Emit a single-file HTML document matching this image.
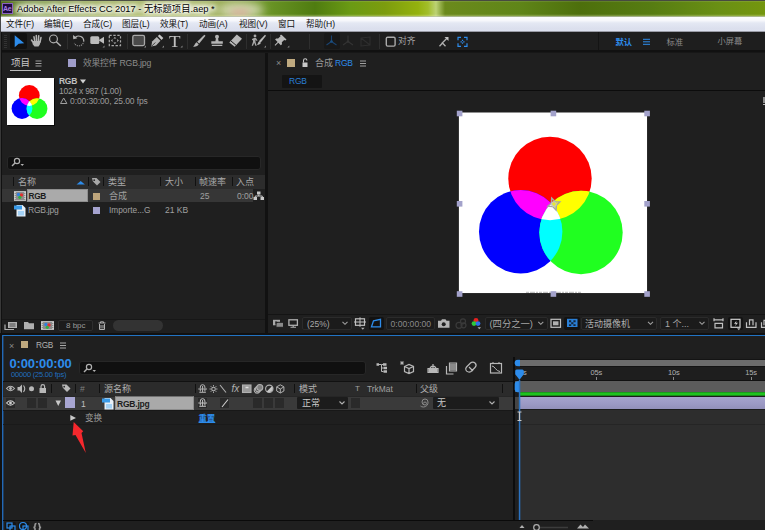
<!DOCTYPE html>
<html lang="zh-CN">
<head>
<meta charset="utf-8">
<title>Adobe After Effects CC 2017 - 无标题项目.aep *</title>
<style>
*{margin:0;padding:0;box-sizing:border-box}
html,body{width:765px;height:530px;overflow:hidden;background:#1f1f1f}
body{position:relative;font-family:"Liberation Sans","Noto Sans CJK SC",sans-serif;font-size:9px;color:#a4a4a4;line-height:1}
.a,.a *{position:absolute}
.t{white-space:nowrap;line-height:12px;height:12px}
svg{overflow:visible}
.blue{color:#2d8ceb}
/* title */
#title{left:0;top:0;width:765px;height:17px;background:#5f8517;overflow:hidden}
#menu{left:0;top:17px;width:765px;height:15px;background:linear-gradient(#fcfdfe 0,#f6f7fb 3.5px,#e4e8f3 6px,#dbdfed 12px,#dde1ef 14px,#dde1ef 14px,#9a9ca6 14px,#9a9ca6 15px)}
#menu .t{color:#111;font-size:8.6px;top:0.5px;line-height:13px;height:13px}
#tools{left:0;top:32px;width:765px;height:20px;background:#1e1e1e}

#tools .sep{top:2px;width:1px;height:15px;background:#2e2e2e}
.panel{background:#1f1f1f}
.dk{background:#161616}
.hd{background:#2b2b2b}
.sq{width:7px;height:7px}
.lav{background:#a9a7d6}
.tan{background:#c4a77c}
.vsep{width:1px;background:#111}
.btn{background:#161616;border:1px solid #2e2e2e;border-radius:2px}

#proj .t{font-size:8.5px}
.col{top:177px;width:1px;height:9px;background:#111}

#view .t{font-size:9px}
.hnd{width:5px;height:5px;background:#a8a6d2;border:0}
.dd{background:#1b1b1b;border:1px solid #2b2b2b;border-radius:2px}

#tl .t{font-size:9px}
.tcol{top:384px;width:1px;height:9px;background:#111}
.sw{width:9px;height:10px;background:#2a2a2a;top:398px}
</style>
</head>
<body>
<div class="a" id="title">
  <div style="left:0;top:0;width:765px;height:17px;background:linear-gradient(90deg,#4e6a1a 0,#6a8a2a 40px,#8da040 110px,#93a644 200px,#8fa448 225px,#6a9426 268px,#4f7c10 315px,#6a9a14 350px,#7c9c0e 385px,#94b20e 418px,#a2be2a 428px,#bcd274 436px,#6b8a1c 445px,#5f8518 520px,#4d6f0c 580px,#567c12 650px,#6a9014 720px,#74960e 765px)"></div>
  <div style="left:218px;top:2px;width:46px;height:16px;border-radius:50%;background:#e6e6cc;filter:blur(5px);opacity:.8"></div>
  <div style="left:230px;top:9px;width:20px;height:7px;border-radius:50%;background:#d9a898;filter:blur(3px);opacity:.8"></div>
  <div style="left:14px;top:3px;width:203px;height:12px;border-radius:6px;background:#fffff0;filter:blur(5px);opacity:.62"></div>
  <div style="left:0;top:0;width:765px;height:1px;background:#474a40"></div>
  <div style="left:0;top:1px;width:765px;height:1px;background:rgba(255,255,255,.1)"></div>
  <div style="left:0;top:14px;width:765px;height:1px;background:rgba(255,255,255,.06)"></div>
  <div style="left:0;top:15px;width:765px;height:1px;background:rgba(255,255,200,.22)"></div>
  <div style="left:0;top:16px;width:765px;height:1px;background:rgba(190,196,180,.75)"></div>
  <div style="left:1.5px;top:3px;width:11px;height:11px;background:#1f0a40;border:1px solid #8a60c0"></div>
  <div class="t" style="left:3px;top:3px;font-size:7px;color:#a57fe0;font-weight:bold;line-height:11px;height:11px;letter-spacing:-0.2px">Ae</div>
  <div class="t" id="ttl" style="left:17px;top:2.600px;font-size:9.3px;color:#000;line-height:13px;height:13px;text-shadow:0 0 3px #fff,0 0 4px #fff,0 0 5px #fff,0 0 6px rgba(255,255,255,.9),0 0 8px rgba(255,255,255,.8)">Adobe After Effects CC 2017 - 无标题项目.aep *</div>
</div>
<div class="a" id="menu">
  <div class="t" style="left:6px">文件(F)</div>
  <div class="t" style="left:44px">编辑(E)</div>
  <div class="t" style="left:83px">合成(C)</div>
  <div class="t" style="left:122px">图层(L)</div>
  <div class="t" style="left:160px">效果(T)</div>
  <div class="t" style="left:199px">动画(A)</div>
  <div class="t" style="left:239px">视图(V)</div>
  <div class="t" style="left:278px">窗口</div>
  <div class="t" style="left:306px">帮助(H)</div>
</div>
<div class="a" id="tools">
  <div style="left:0;top:18px;width:765px;height:2px;background:#111"></div>
  <div style="left:4px;top:3px;width:3px;height:13px;background:repeating-linear-gradient(#333 0,#333 1px,#1c1c1c 1px,#1c1c1c 2px)"></div>
  <div style="left:10px;top:1px;width:17px;height:16px;background:#111;border-radius:2px"></div>
  <svg style="left:0;top:0" width="765" height="20" viewBox="0 32 765 20">
    <path d="M14.700 35.200 L24.300 43.200 L18.700 43.700 L14.700 47.200 Z" fill="#2d8ceb"/>
    <!-- hand -->
    <g fill="none" stroke="#b4b4b4" stroke-width="1.500" stroke-linecap="round">
      <path d="M34 36.800 l.7 4 M36.300 35.500 l.2 5 M38.700 35.800 l-.3 5 M41 37.500 l-1 4.500 M31.500 40 l2.500 3.500"/>
    </g>
    <path d="M33 41 h7.800 l-1 3.500 l-1.300 1.900 h-4 l-2-2.500z" fill="#b4b4b4"/>
    <!-- zoom -->
    <circle cx="53.500" cy="38.900" r="3.900" fill="none" stroke="#b0b0b0" stroke-width="1.200"/>
    <path d="M56.300 41.700 l4.500 4.300" stroke="#b0b0b0" stroke-width="1.500"/>
    <!-- rotate -->
    <path d="M75.500 37.300 a5 5 0 0 1 8.300 3.700" fill="none" stroke="#b0b0b0" stroke-width="1.200"/>
    <path d="M83.800 41 a5 5 0 0 1 -9.500 2" fill="none" stroke="#8a8a8a" stroke-width="1.100" stroke-dasharray="1.200 0.900"/>
    <path d="M73 35 l0.300 4.200 4-1z" fill="#b8b8b8"/>
    <!-- camera -->
    <rect x="90.300" y="36.300" width="9" height="7.800" rx="1.500" fill="#bcbcbc"/>
    <path d="M98.500 40.200 l5.500-3.500 v7z" fill="#bcbcbc"/>
    <path d="M102.500 47.500 l2-2 v2z" fill="#8a8a8a"/>
    <!-- pan behind -->
    <rect x="109.300" y="35.400" width="11.200" height="10.200" fill="none" stroke="#a8a8a8" stroke-width="1.200" stroke-dasharray="2.400 1.600"/>
    <path d="M114.900 37 l1.500 1.500 h-3z M114.900 44 l1.500-1.500 h-3z M111 40.500 l1.500-1.500 v3z M118.800 40.500 l-1.500-1.500 v3z" fill="#b8b8b8"/>
    <!-- rect -->
    <rect x="132.800" y="35.400" width="11.700" height="10.200" rx="1.500" fill="#4a4a4a" stroke="#a8a8a8" stroke-width="1.300"/>
    <path d="M144 47.500 l2-2 v2z" fill="#8a8a8a"/>
    <!-- pen -->
    <path d="M151.300 46.500 l.8-5 4.700-4.500 3.700 3.700 -4.500 4.700z" fill="#b4b4b4"/>
    <path d="M151.800 46 l3.500-3.500" stroke="#1e1e1e" stroke-width="0.800"/>
    <path d="M157.800 36 l1.800-1.600 3.700 3.700 -1.700 1.800z" fill="#c8c8c8"/>
    <path d="M162 47.500 l2-2 v2z" fill="#8a8a8a"/>
    <path d="M180.500 47.500 l2-2 v2z" fill="#8a8a8a"/>
    <!-- brush -->
    <path d="M204.300 34.800 l1.200 1 -6.300 7.700 -2-1.700z" fill="#b4b4b4"/>
    <path d="M196.500 42.300 l2.200 1.900 c-.6 1.900 -3 2.700 -5.800 2.400 c1.800-1 1.900-2.900 3.600-4.300z" fill="#b4b4b4"/>
    <!-- stamp -->
    <circle cx="217" cy="36.800" r="2" fill="#b4b4b4"/>
    <path d="M216 38 h2 l.6 3.200 h-3.200z M211.300 41.200 h11.500 v2.600 h-11.500z M211.800 44.800 h10.500 v1.300 h-10.500z" fill="#b4b4b4"/>
    <!-- eraser -->
    <path d="M229.300 42.500 l7.500-8 5.200 4.300 -7.300 8z" fill="#b8b8b8"/>
    <path d="M231 41 l5.200 4.400" stroke="#1e1e1e" stroke-width="1"/>
    <!-- roto brush -->
    <path d="M265 34.800 l1 1 -5.500 7 -1.700-1.500z" fill="#b8b8b8"/>
    <path d="M259 41.500 l1.800 1.600 c-.5 1.300 -2 1.900 -4 1.700 c1.200-.8 1-2.200 2.200-3.300z" fill="#b8b8b8"/>
    <circle cx="255" cy="36" r="1.400" fill="#a8a8a8"/>
    <path d="M252 39 l2-1 h2 l1.500 2.500 -.8.600 -1.200-1.500 v2.500 l1.200 3.600 h-1.300 l-1.200-3 -1.200 3 h-1.300 l1.300-4 v-2 l-1 .8z" fill="#a8a8a8"/>
    <path d="M264 47.500 l2-2 v2z" fill="#8a8a8a"/>
    <!-- pin -->
    <path d="M281.500 34.800 l5 4.600 -1 1 -1.300-.5 -2.400 2.400 .2 2 -1.200 1 -2.500-2.500 -3 3 -.7-.7 3-3 -2.500-2.500 1-1.200 2 .2 2.400-2.400 -.5-1.300z" fill="#b8b8b8"/>
    <path d="M287.300 47.500 l2-2 v2z" fill="#8a8a8a"/>
  </svg>
  <div class="t" style="left:169.300px;top:2px;font-family:'Liberation Serif',serif;font-size:16px;line-height:16px;height:16px;color:#c0c0c0;transform:scaleX(1.180);transform-origin:0 0">T</div>
  <div class="sep" style="left:67px"></div>
  <div class="sep" style="left:127px"></div>
  <div class="sep" style="left:187px"></div>
  <div class="sep" style="left:246px"></div>
  <div class="sep" style="left:270px"></div>
  <div class="sep" style="left:309px"></div>
  <div class="sep" style="left:379px"></div>
  <div class="sep" style="left:598px;top:0;height:18px;background:#141414"></div>
  <div style="left:324px;top:1px;width:16px;height:16px;background:#181818;border-radius:2px"></div>
  <svg style="left:0;top:0" width="765" height="20" viewBox="0 32 765 20">
    <g fill="none" stroke-width="1.100">
    <path d="M331.500 35.500 v6 l-5 3.500 M331.500 41.500 l5 3.500" stroke="#1a4370"/>
    <path d="M348 35.500 v6 l-5 3.500 M348 41.500 l5 3.500" stroke="#343434"/>
    <path d="M361 38 l9 -1 v8 l-9 1z M361 38 l9 7" stroke="#2e2e2e"/>
    </g>
    <circle cx="331.500" cy="41.500" r="1.300" fill="#1b4f80"/>
    <circle cx="348" cy="41.500" r="1.300" fill="#343434"/>
    <rect x="386.300" y="37.300" width="8.800" height="8.800" rx="1.300" fill="none" stroke="#aaa" stroke-width="1.400"/>
    <path d="M439.500 46.300 l3-3.300 3 3.300 M441.700 43.500 l5.500-5.500" fill="none" stroke="#b0b0b0" stroke-width="1.300"/><path d="M444.500 37 h4 v4z" fill="#c0c0c0"/>
    <g fill="none" stroke="#2d8ceb" stroke-width="1.200">
      <path d="M458 40.300 v-3 h3 M464 37.300 h3 v3 M467 43.300 v3 h-3 M461 46.300 h-3 v-3"/>
      <path d="M460.500 41.800 h4 M462.500 39.800 v4" stroke-dasharray="1.300 1.400"/>
    </g>
    <path d="M643 39.300 h7 M643 41.800 h7 M643 44.300 h7" stroke="#2d8ceb" stroke-width="1"/>
  </svg>
  <div class="t" style="left:398px;top:3.3px;color:#a4a4a4;font-size:8.800px">对齐</div>
  <div class="t blue" style="left:615.5px;top:4px;font-size:8.300px;font-weight:bold">默认</div>
  <div class="t" style="left:666.500px;top:4px;font-size:8.300px;color:#8a8a8a">标准</div>
  <div class="t" style="left:717.500px;top:4px;font-size:8.200px;color:#8a8a8a">小屏幕</div>
</div>
<!-- dividers -->
<div class="a" style="left:0;top:52px;width:765px;height:1px;background:#171717"></div>
<div class="a" style="left:265px;top:53px;width:3px;height:280px;background:#111"></div>
<div class="a" style="left:0;top:32px;width:2px;height:498px;background:#111;border-left:1px solid #383838"></div>
<!-- project panel -->
<div class="a" id="proj" style="left:0;top:0;width:265px;height:334px">
  <div class="t" style="left:11px;top:57px;font-size:9.5px;color:#c8c8c8">项目</div>
  <div style="left:10px;top:70px;width:31px;height:1px;background:#bdbdbd"></div>
  <svg style="left:0;top:0" width="265" height="334"><path d="M35.5 61 h6 M35.500 63.500 h6 M35.500 66 h6" stroke="#a0a0a0" stroke-width="1"/></svg>
  <div class="lav" style="left:68px;top:59px;width:8px;height:8px;background:#9f9dc9"></div>
  <div class="t" style="left:83px;top:57px;font-size:8.700px;color:#8c8c8c;letter-spacing:-0.15px">效果控件 RGB.jpg</div>
  <!-- thumbnail -->
  <div style="left:7px;top:78px;width:47px;height:47px;background:#fff;box-shadow:1px 1px 0 #0a0a0a"></div>
  <svg style="left:7px;top:78px" width="47" height="47" viewBox="0 0 47 47">
    <defs>
      <clipPath id="tcr"><circle cx="22.3" cy="17.5" r="10.4"/></clipPath>
      <clipPath id="tcb"><circle cx="15" cy="30.500" r="10.400"/></clipPath>
      <clipPath id="tcg"><circle cx="30" cy="30.700" r="10.400"/></clipPath>
    </defs>
    <circle cx="22.300" cy="17.500" r="10.400" fill="#f00"/>
    <circle cx="15" cy="30.500" r="10.400" fill="#00f"/>
    <circle cx="30" cy="30.700" r="10.400" fill="#1fff1f"/>
    <circle cx="15" cy="30.500" r="10.400" fill="#f0f" clip-path="url(#tcr)"/>
    <circle cx="30" cy="30.700" r="10.400" fill="#ff0" clip-path="url(#tcr)"/>
    <circle cx="30" cy="30.700" r="10.400" fill="#0ff" clip-path="url(#tcb)"/>
    <g clip-path="url(#tcr)"><circle cx="30" cy="30.700" r="10.400" fill="#fff" clip-path="url(#tcb)"/></g>
  </svg>
  <div class="t" style="left:59px;top:75px;font-size:8.5px;font-weight:bold;color:#c0c0c0;letter-spacing:-0.3px">RGB</div>
  <svg style="left:0;top:0" width="265" height="334"><path d="M80 79.500 h6 l-3 4z" fill="#d0d0d0"/>
    <path d="M60.500 103.500 l3.200-5.500 3.200 5.500z" fill="none" stroke="#a0a0a0" stroke-width="1"/></svg>
  <div class="t" style="left:59px;top:85px;font-size:8.500px;color:#9c9c9c;letter-spacing:-0.25px">1024 x 987 (1.00)</div>
  <div class="t" style="left:70px;top:95px;font-size:8.500px;color:#9c9c9c;letter-spacing:-0.1px">0:00:30:00, 25.00 fps</div>
  <!-- search -->
  <div style="left:6.5px;top:155.5px;width:254px;height:14px;background:#101010;border-radius:3px;border:1px solid #272727"></div>
  <svg style="left:0;top:0" width="265" height="334"><circle cx="17" cy="161" r="2.600" fill="none" stroke="#b0b0b0" stroke-width="1.200"/><path d="M15 163 l-3 3" stroke="#b0b0b0" stroke-width="1.400"/><path d="M20.500 164 h3.500 l-1.750 2z" fill="#b0b0b0"/></svg>
  <!-- header -->
  <div style="left:2px;top:175px;width:263px;height:14px;background:#2c2c2c"></div>
  <div class="col" style="left:13px"></div>
  <div class="col" style="left:88px"></div>
  <div class="col" style="left:103px"></div>
  <div class="col" style="left:160px"></div>
  <div class="col" style="left:195px"></div>
  <div class="col" style="left:232px"></div>
  <div class="t" style="left:18px;top:176px;font-size:9px;color:#a8a8a8">名称</div>
  <div class="t" style="left:108px;top:176px;font-size:9px;color:#a8a8a8">类型</div>
  <div class="t" style="left:165px;top:176px;font-size:9px;color:#a8a8a8">大小</div>
  <div class="t" style="left:199px;top:176px;font-size:9px;color:#a8a8a8">帧速率</div>
  <div class="t" style="left:236px;top:176px;font-size:9px;color:#a8a8a8">入点</div>
  <svg style="left:0;top:0" width="265" height="334">
    <path d="M76.500 184.500 l4.200-3.600 4.200 3.600z" fill="#2d8ceb"/>
    <path d="M92 178 h4.500 l4 4 -3.500 3.500 -4.200-4.200 -0.800-3.300z" fill="#a8a8a8"/>
    <circle cx="94.200" cy="180.200" r="0.900" fill="#2c2c2c"/>
  </svg>
  <!-- row 1 selected -->
  <div style="left:2px;top:189px;width:251px;height:13px;background:#363636"></div>
  <div style="left:27px;top:189px;width:61px;height:13px;background:#aaa;border:1px solid #8f8f8f"></div>
  <div class="t" style="left:28.5px;top:190px;font-size:8.3px;font-weight:bold;color:#1c1c1c;letter-spacing:-0.3px">RGB</div>
  <svg style="left:0;top:0" width="265" height="334">
    <rect x="14.500" y="191.500" width="11" height="9" fill="#8c8c8c" stroke="#b8b8b8" stroke-width="1"/>
    <path d="M15 192 v8 M25 192 v8" stroke="#d8d8d8" stroke-width="1.400" stroke-dasharray="1 1"/>
    <circle cx="18.500" cy="194.500" r="1.700" fill="#3080e0"/><circle cx="21.500" cy="195" r="1.700" fill="#e03030"/><circle cx="19.800" cy="197.300" r="1.600" fill="#30b040"/>
    <path d="M257 191.500 h3.500 v3 h-3.500z M253.500 197 h3.500 v3 h-3.500z M260.500 197 h3.500 v3 h-3.500z" fill="#c8c8c8"/>
    <path d="M258.750 194.500 v1.500 M255.250 197 v-1 h7 v1" fill="none" stroke="#c8c8c8" stroke-width="1"/>
    <!-- file icon row2 -->
    <path d="M16.500 205 h6 l3 3 v8.500 h-9z" fill="#e8f0f8"/>
    <path d="M14 205.500 h8 v4 h-8z" fill="#3b9be8"/>
    <path d="M18 211 h6 v4.500 h-6z" fill="#a4d2f6"/>
  </svg>
  <div class="tan" style="left:92.5px;top:192.5px;width:7px;height:7px;background:#bfa67c"></div>
  <div class="t" style="left:109px;top:190px;font-size:9px;color:#a0a0a0">合成</div>
  <div class="t" style="left:200px;top:190px;color:#a0a0a0">25</div>
  <div class="t" style="left:237px;top:190px;color:#a0a0a0">0:00</div>
  <!-- row 2 -->
  <div class="t" style="left:28px;top:204px;font-size:8.500px;color:#a0a0a0;letter-spacing:-0.25px">RGB.jpg</div>
  <div class="lav" style="left:92.5px;top:206.5px;width:7px;height:7px;background:#a5a3cf"></div>
  <div class="t" style="left:109px;top:204px;color:#a0a0a0;font-size:8.300px">Importe...G</div>
  <div class="t" style="left:165px;top:204px;color:#a0a0a0">21 KB</div>
  <!-- bottom bar -->
  <div style="left:2px;top:318.5px;width:263px;height:1px;background:#171717"></div>
  <div style="left:58px;top:320px;width:35px;height:11px;border:1px solid #2e2e2e;border-radius:2px;background:#1c1c1c"></div>
  <div class="t" style="left:66px;top:320px;font-size:8px;color:#9a9a9a">8 bpc</div>
  <div style="left:113px;top:320px;width:50px;height:11px;border-radius:6px;background:#333"></div>
  <svg style="left:0;top:0" width="265" height="334">
    <rect x="8" y="322" width="9" height="6" fill="#b0b0b0"/><path d="M9.500 324 h6 M9.500 326 h6" stroke="#333" stroke-width="0.800"/><path d="M5 324.500 v5 h9" fill="none" stroke="#b0b0b0" stroke-width="1.200"/>
    <path d="M24 322 h4 l1 1.200 h5 v6 h-10z" fill="#b0b0b0"/>
    <rect x="41.500" y="321.500" width="12" height="8" fill="#8c8c8c" stroke="#b8b8b8" stroke-width="1"/>
    <path d="M42 322 v8 M53 322 v8" stroke="#d8d8d8" stroke-width="1.400" stroke-dasharray="1 1"/>
    <circle cx="46" cy="324.500" r="1.700" fill="#3080e0"/><circle cx="49" cy="325" r="1.700" fill="#e03030"/><circle cx="47.300" cy="327.300" r="1.600" fill="#30b040"/>
    <path d="M98.500 323 h7 M100.500 323 v-1.200 h3 v1.200 M99.500 324 v5.500 h5 v-5.500 M101 325 v3.500 M103 325 v3.500" fill="none" stroke="#b0b0b0" stroke-width="1"/>
  </svg>
</div>

<!-- comp viewer -->
<div class="a" id="view" style="left:0;top:0;width:765px;height:334px">
  <div style="left:268px;top:90px;width:497px;height:1px;background:#0c0c0c"></div>
  <div style="left:763px;top:97px;width:2px;height:6px;background:#8c8c8c"></div>
  <div style="left:763px;top:104px;width:2px;height:1px;background:#b8b8b8"></div>
  <div class="t" style="left:276px;top:57px;font-size:9px;color:#8a8a8a">×</div>
  <div style="left:287px;top:59px;width:8px;height:8px;background:#bfa97f"></div>
  <svg style="left:0;top:0" width="765" height="334">
    <rect x="302.500" y="62.500" width="5" height="4.500" fill="#c8c8c8"/><path d="M303.500 62.500 v-2 a1.700 1.700 0 0 1 3.400 0" fill="none" stroke="#c8c8c8" stroke-width="1.100"/>
    <path d="M360 61 h6 M360 63.500 h6 M360 66 h6" stroke="#a0a0a0" stroke-width="1"/>
  </svg>
  <div class="t" style="left:315px;top:57px;font-size:9px;color:#9a9a9a">合成</div>
  <div class="t blue" style="left:335px;top:57px;font-size:8.500px;letter-spacing:-0.2px">RGB</div>
  <div style="left:282px;top:75px;width:40px;height:13px;background:#141414;border-radius:1px"></div>
  <div class="t blue" style="left:289px;top:75px;font-size:8.500px;letter-spacing:-0.2px;color:#2a7fd6">RGB</div>
  <!-- canvas -->
  <svg style="left:0;top:0" width="765" height="334"><rect x="458.9" y="112.5" width="188.15" height="180.55" fill="#fff"/></svg>
  <svg style="left:0;top:0" width="765" height="334">
    <defs>
      <clipPath id="cr"><circle cx="550" cy="178.500" r="41.700"/></clipPath>
      <clipPath id="cb"><circle cx="520.700" cy="231.700" r="41.700"/></clipPath>
    </defs>
    <circle cx="550" cy="178.500" r="41.700" fill="#f00"/>
    <circle cx="520.700" cy="231.700" r="41.700" fill="#00f"/>
    <circle cx="581" cy="232.500" r="41.700" fill="#20ff20"/>
    <circle cx="520.700" cy="231.700" r="41.700" fill="#f0f" clip-path="url(#cr)"/>
    <circle cx="581" cy="232.500" r="41.700" fill="#ff0" clip-path="url(#cr)"/>
    <circle cx="581" cy="232.500" r="41.700" fill="#0ff" clip-path="url(#cb)"/>
    <g clip-path="url(#cr)"><circle cx="581" cy="232.500" r="41.700" fill="#fff" clip-path="url(#cb)"/></g>
    <path d="M526 292.300 h55" stroke="#c4c4c4" stroke-width="1.200" stroke-dasharray="3 1 5 1 2 1"/>
    <!-- anchor -->
    <g transform="translate(553.9 204.1) rotate(-20)"><path d="M0 -6.500 L2 -2 L6.500 0 L2 2 L0 6.500 L-2 2 L-6.500 0 L-2 -2Z" fill="rgba(180,180,170,.3)" stroke="#a6a6a2" stroke-width="1.300"/><circle cx="0" cy="0" r="2.300" fill="none" stroke="#c8c8bc" stroke-width="1.100"/></g>
  </svg>
  <svg style="left:0;top:0" width="765" height="334"><rect x="456.8" y="110.7" width="5.6" height="5.6" fill="#a3a2cb"/><rect x="550.6" y="110.7" width="5.6" height="5.6" fill="#a3a2cb"/><rect x="644.3" y="110.7" width="5.6" height="5.6" fill="#a3a2cb"/><rect x="456.8" y="201.0" width="5.6" height="5.6" fill="#a3a2cb"/><rect x="644.3" y="201.0" width="5.6" height="5.6" fill="#a3a2cb"/><rect x="456.8" y="291.2" width="5.6" height="5.6" fill="#a3a2cb"/><rect x="550.6" y="291.2" width="5.6" height="5.6" fill="#a3a2cb"/><rect x="644.3" y="291.2" width="5.6" height="5.6" fill="#a3a2cb"/></svg>
  <!-- bottom bar -->
  <div style="left:268px;top:313.5px;width:497px;height:1px;background:#141414"></div>
  <div class="dd" style="left:302px;top:317px;width:50px;height:13px"></div>
  <div class="t" style="left:307px;top:318px;font-size:8.500px;color:#a8a8a8">(25%)</div>
  <div style="left:369px;top:317px;width:15px;height:13px;background:#121212;border-radius:2px"></div>
  <div class="dd" style="left:386px;top:317px;width:49px;height:13px"></div>
  <div class="t" style="left:390.5px;top:318px;font-size:8.6px;color:#8a8a8a;letter-spacing:0px">0:00:00:00</div>
  <div class="dd" style="left:485px;top:317px;width:63px;height:13px"></div>
  <div class="t" style="left:489.5px;top:318px;font-size:9.3px;color:#a8a8a8">(四分之一)</div>
  <div style="left:564px;top:317px;width:16px;height:13px;background:#121212;border-radius:2px"></div>
  <div class="dd" style="left:581px;top:317px;width:76px;height:13px"></div>
  <div class="t" style="left:585px;top:318px;font-size:9px;color:#b0b0b0">活动摄像机</div>
  <div class="dd" style="left:660px;top:317px;width:49px;height:13px"></div>
  <div class="t" style="left:665px;top:318px;font-size:9px;color:#a8a8a8">1 个...</div>
  <div style="left:728px;top:317px;width:15px;height:13px;background:#121212;border-radius:2px"></div>

  <svg style="left:0;top:0" width="765" height="334"><g transform="translate(0,-0.7)">
    <rect x="273" y="320.500" width="7" height="5.500" fill="#a8a8a8"/><rect x="276" y="323" width="7.500" height="5" fill="#8a8a8a" stroke="#1f1f1f" stroke-width="1"/><path d="M275.500 321.800 l2.500 1.500 -2.500 1.500z" fill="#1f1f1f"/>
    <rect x="288.900" y="320.500" width="8.500" height="5.500" fill="none" stroke="#b0b0b0" stroke-width="1.300"/><path d="M290.500 328 h5.500 M293.200 326 v2" stroke="#b0b0b0" stroke-width="1.100"/>
    <path d="M342.5 322.5 l2.5 2.500 2.500-2.500" fill="none" stroke="#a0a0a0" stroke-width="1.100"/>
    <rect x="355.500" y="319.500" width="9" height="6.500" fill="none" stroke="#c0c0c0" stroke-width="1.200"/><path d="M360 318 v9.500 M354 322.700 h12" stroke="#c0c0c0" stroke-width="1"/><path d="M361 328.500 h3.500 l-1.750 2z" fill="#b0b0b0"/>
    <path d="M371.500 327.500 l2-6 7-1.500 v7.500z" fill="none" stroke="#2d8ceb" stroke-width="1.300"/>
    <path d="M438 321.500 h3 l1-1.500 h3.500 l1 1.500 h3 v7 h-11.500z" fill="#b4b4b4"/><circle cx="443.700" cy="325" r="2" fill="#1f1f1f"/>
    <g fill="none" stroke="#3a3a3a" stroke-width="1.200"><circle cx="463" cy="322" r="2.500"/><circle cx="459" cy="326" r="3"/><circle cx="463.500" cy="326" r="2.500"/></g>
    <circle cx="476" cy="321" r="2.400" fill="#e82020"/><circle cx="474" cy="324.300" r="2.400" fill="#2fc83a"/><circle cx="478" cy="324.300" r="2.400" fill="#2d6fe8"/><path d="M477.500 328 h3.500 l-1.750 2z" fill="#b0b0b0"/>
    <path d="M538.3 322.5 l2.5 2.500 2.500-2.500" fill="none" stroke="#a0a0a0" stroke-width="1.100"/>
    <rect x="551" y="320" width="9.500" height="8" fill="none" stroke="#c0c0c0" stroke-width="1.200"/><rect x="553" y="322" width="5.500" height="4" fill="#b0b0b0"/>
    <rect x="567" y="319.500" width="10.500" height="8.200" fill="#2a7fd6"/>
    <path d="M569 321 h2.200 v2 h-2.200z M573.400 321 h2.200 v2 h-2.200z M571.200 323 h2.200 v2 h-2.200z M569 325 h2.200 v1.700 h-2.200z M573.400 325 h2.200 v1.700 h-2.200z" fill="#14273c"/>
    <path d="M648.0 322.5 l2.5 2.500 2.500-2.500" fill="none" stroke="#a0a0a0" stroke-width="1.100"/> <path d="M699.5 322.5 l2.5 2.500 2.500-2.500" fill="none" stroke="#a0a0a0" stroke-width="1.100"/>
    <path d="M714 320.500 h9 M714 319 v3 M723 319 v3 M715 324 h7.500 v4.500 h-7.500z" fill="none" stroke="#c0c0c0" stroke-width="1.200"/>
    <rect x="731" y="320" width="9" height="8" fill="none" stroke="#d0d0d0" stroke-width="1.200"/><path d="M736.500 321.500 l-2.500 3 h2 l-1 2.500 3-3.500 h-2z" fill="#d0d0d0"/><path d="M737 329 h3.500 l-1.750 2z" fill="#b0b0b0"/>
    <path d="M746.500 323 v5 h9.500 v-5 M749.500 326 v-5.500 h3.500 v5.500" fill="none" stroke="#c0c0c0" stroke-width="1.200"/>
    <path d="M761.500 323 v5 h6 M764 326 v-5 h3" fill="none" stroke="#c0c0c0" stroke-width="1.200"/>
  </g></svg>
</div>

<!-- timeline -->
<div class="a" id="tl" style="left:0;top:0;width:765px;height:530px">
  <div style="left:0;top:333px;width:765px;height:2px;background:#111"></div>
  <div style="left:2px;top:335px;width:763px;height:1px;background:#2274c4"></div>
  <div style="left:2px;top:335px;width:1px;height:195px;background:#2268b6"></div>
  <div style="left:3px;top:336px;width:1px;height:194px;background:rgba(34,104,182,.4)"></div>
  <div style="left:5px;top:522px;width:11px;height:8px;background:#141414;border-radius:2px 2px 0 0"></div>
  <div style="left:18px;top:522px;width:11px;height:8px;background:#141414;border-radius:2px 2px 0 0"></div>
  <div style="left:0;top:335px;width:2px;height:195px;background:#111"></div>
  <!-- tab -->
  <div class="t" style="left:9px;top:340px;font-size:9px;color:#8a8a8a">×</div>
  <div style="left:21px;top:341px;width:7px;height:7px;background:#bfa97f"></div>
  <div class="t" style="left:36px;top:339px;font-size:8.300px;color:#b0b0b0;letter-spacing:-0.3px">RGB</div>
  <svg style="left:0;top:0" width="765" height="530"><path d="M60 343 h6 M60 345.500 h6 M60 348 h6" stroke="#a8a8a8" stroke-width="1"/></svg>
  <!-- timecode -->
  <div class="t" style="left:9.5px;top:356px;font-size:13px;font-weight:bold;color:#2d8ceb;line-height:16px;height:16px;letter-spacing:-0.15px">0:00:00:00</div>
  <div class="t" style="left:11px;top:370px;font-size:7.500px;color:#1f6fc0;line-height:10px;height:10px;letter-spacing:-0.2px">00000 (25.00 fps)</div>
  <!-- search -->
  <div style="left:79px;top:360.5px;width:287px;height:14px;background:#101010;border-radius:3px;border:1px solid #272727"></div>
  <svg style="left:0;top:0" width="765" height="530">
    <circle cx="89" cy="367" r="2.600" fill="none" stroke="#b0b0b0" stroke-width="1.200"/><path d="M87 369 l-3 3" stroke="#b0b0b0" stroke-width="1.400"/><path d="M92.500 370 h3.500 l-1.750 2z" fill="#b0b0b0"/>
    <!-- toolbar icons -->
    <g fill="none" stroke="#b8b8b8" stroke-width="1.200">
      <path d="M377 364.500 h4 M383 364.500 h-1.500 v7 h2 M381.500 368 h2" stroke-width="1"/><path d="M383 363.200 h3.500 v2.500 h-3.500z M383.500 366.800 h3.500 v2.500 h-3.500z M383.500 370.300 h3.500 v2.500 h-3.500z M376.500 363.200 h2.500 v2.500 h-2.500z" fill="#b8b8b8" stroke="none"/>
      <path d="M404.500 366.500 l4.500-2 4.500 2 v5 l-4.500 2 -4.500-2z M404.500 366.500 l4.500 2 4.500-2 M409 368.500 v5"/>
      <path d="M402 361 v4 M400 363 h4 M400.600 361.600 l2.800 2.800 M403.400 361.600 l-2.800 2.800" stroke-width="0.900"/>
      <path d="M428 368.500 h10 v4 h-10z M430 368 a3.500 4 0 0 1 6 0 M433 364 v4" />
      <path d="M449.500 363 h7 v8 h-7z M446.500 366 v8 h7"/>
      <path d="M468.500 372 a3 3 0 0 1 -2-5 l4-4 a3 3 0 0 1 4.500 4.500 l-4 4 a3 3 0 0 1 -2.500 .5z M469 367 l4 4"/>
      <rect x="490.500" y="363.500" width="11" height="9.500"/><path d="M492 366 c3 0 4 5.500 8 5.500 M493 362 v2 M499 362 v2" stroke-width="1"/>
    </g>
    <path d="M428.500 369 h9 v3 h-9z" fill="#b8b8b8"/>
    <path d="M450 363.500 h6 v7 h-6z" fill="#8a8a8a"/>
  </svg>
  <!-- header row -->
  <div style="left:3px;top:381px;width:511px;height:1px;background:#111"></div>
  <div style="left:3px;top:382px;width:511px;height:14px;background:#2b2b2b"></div>
  <div class="tcol" style="left:51px"></div>
  <div class="tcol" style="left:75px"></div>
  <div class="tcol" style="left:99px"></div>
  <div class="tcol" style="left:195px"></div>
  <div class="tcol" style="left:294px"></div>
  <div class="tcol" style="left:416px"></div>
  <div class="tcol" style="left:502px"></div>
  <div class="t" style="left:80px;top:383px;font-size:8.500px;color:#7f7f7f">#</div>
  <div class="t" style="left:104px;top:383px;font-size:9px;color:#b0b0b0">源名称</div>
  <div class="t" style="left:299px;top:383px;font-size:9px;color:#b0b0b0">模式</div>
  <div class="t" style="left:355px;top:383px;font-size:8px;color:#a0a0a0">T</div>
  <div class="t" style="left:367px;top:383px;font-size:8.400px;color:#a0a0a0">TrkMat</div>
  <div class="t" style="left:420px;top:383px;font-size:9px;color:#b0b0b0">父级</div>
  <svg style="left:0;top:0" width="765" height="530"><g fill="none" stroke="#b4b4b4" stroke-width="1"><path d="M200.300 388.500 v-1.500 a2.300 2.300 0 0 1 4.600 0 v1.500 M198.300 389 h8.700 M200.300 389 v2.500 M204.900 389 v2.500 M202.600 386 v6 M199.300 392.300 h6.600"/></g></svg>
  <div class="t" style="left:231.500px;top:382.500px;font-size:10px;font-style:italic;color:#b0b0b0">fx</div>
  <svg style="left:0;top:0" width="765" height="530">
    <!-- eye -->
    <path d="M6.500 388.500 q4-4.500 8 0 q-4 4.500 -8 0z" fill="none" stroke="#b8b8b8" stroke-width="1.100"/><circle cx="10.500" cy="388.500" r="1.400" fill="#b8b8b8"/>
    <!-- speaker -->
    <path d="M17.500 387 h2 l2.500-2.500 v8.500 l-2.500-2.500 h-2z" fill="#b8b8b8"/><path d="M23.500 385.500 q2.500 3.200 0 6.500" fill="none" stroke="#b8b8b8" stroke-width="1.100"/>
    <circle cx="31.500" cy="388.800" r="2.500" fill="#b8b8b8"/>
    <rect x="39.500" y="388" width="6.500" height="5" fill="#b8b8b8"/><path d="M41 388 v-1.500 a1.800 1.800 0 0 1 3.600 0 v1.500" fill="none" stroke="#b8b8b8" stroke-width="1.200"/>
    <path d="M62 384.500 h4.500 l4 4 -3.500 3.500 -4.200-4.200 -0.800-3.300z" fill="#b8b8b8"/><circle cx="64.200" cy="386.700" r="0.900" fill="#2b2b2b"/>
    <!-- switches -->
    <g fill="none" stroke="#b0b0b0" stroke-width="1.100">
      <circle cx="213.500" cy="389" r="1.800"/><path d="M213.500 385 v1.500 M213.500 391.500 v1.500 M209.500 389 h1.500 M216 389 h1.500 M210.700 386.200 l1 1 M216.300 386.200 l-1 1 M210.700 391.800 l1-1 M216.300 391.800 l-1-1" stroke-width="0.900"/>
      <path d="M220 385 l6 7.500"/>
      <rect x="242.500" y="385" width="8.500" height="7.500" fill="#9a9a9a"/><path d="M245.500 387.500 h3" stroke="#ddd" stroke-width="1.500"/>
      <circle cx="257" cy="390.300" r="2.800"/><circle cx="258.300" cy="389" r="2.800"/><circle cx="259.800" cy="387.500" r="3" fill="#808080"/>
      <circle cx="269.300" cy="388.800" r="3.700"/>
      <path d="M280.300 384.800 l3.600 2 v4.200 l-3.600 2 -3.600-2 v-4.200z M280.300 389 v4 M280.300 389 l-3.600-2.100 M280.300 389 l3.600-2.100" stroke-width="1"/>
    </g>
    <path d="M271.900 386.200 a3.700 3.700 0 0 1 -5.200 5.200z" fill="#c8c8c8"/>
    
  </svg>
  <!-- layer row -->
  <div style="left:3px;top:396px;width:510px;height:14px;background:#3a3a3a"></div>
  <div style="left:3px;top:396px;width:510px;height:1px;background:#262626"></div>
  <div class="sw" style="left:6px"></div>
  <div class="sw" style="left:27px"></div>
  <div class="sw" style="left:38px"></div>
  <div style="left:65px;top:397px;width:10px;height:11px;background:#a8a6d2"></div>
  <div class="t" style="left:81px;top:398px;font-size:8.500px;color:#c0c0c0">1</div>
  <div style="left:115px;top:396px;width:79px;height:14px;background:#a9a9a9;border:1px solid #8c8c8c;border-top-color:#707070"></div>
  <div class="t" style="left:117px;top:398px;font-size:8.500px;font-weight:bold;color:#1c1c1c;letter-spacing:-0.2px">RGB.jpg</div>
  <div class="sw" style="left:198px"></div>
  <div class="sw" style="left:220px"></div>
  <div class="sw" style="left:253px"></div>
  <div class="sw" style="left:264px"></div>
  <div class="sw" style="left:275px"></div>
  <svg style="left:0;top:0" width="765" height="530"><g fill="none" stroke="#c4c4c4" stroke-width="1"><path d="M200.300 402.500 v-1.500 a2.300 2.300 0 0 1 4.600 0 v1.500 M198.300 403 h8.700 M200.300 403 v2.500 M204.900 403 v2.500 M202.600 400 v6 M199.300 406.300 h6.600"/></g></svg>
  <div style="left:297px;top:397px;width:51px;height:12px;background:#1c1c1c;border-radius:1px"></div>
  <div class="t" style="left:302px;top:397px;font-size:9px;color:#c8c8c8">正常</div>
  <div class="sw" style="left:351px"></div>
  <div style="left:433px;top:397px;width:66px;height:12px;background:#1c1c1c;border-radius:1px"></div>
  <div class="t" style="left:437px;top:397px;font-size:9px;color:#c8c8c8">无</div>
  <svg style="left:0;top:0" width="765" height="530">
    <path d="M6.500 403 q4-4.500 8 0 q-4 4.500 -8 0z" fill="none" stroke="#d0d0d0" stroke-width="1.100"/><circle cx="10.500" cy="403" r="1.400" fill="#d0d0d0"/>
    <path d="M55.500 400.500 h5.500 l-2.750 5.500z" fill="#c8c8c8"/>
    <path d="M104.500 398 h6 l3 3 v8.500 h-9z" fill="#e8f0f8"/><path d="M102 398.500 h8 v4 h-8z" fill="#3b9be8"/><path d="M106 404 h6 v4.500 h-6z" fill="#a4d2f6"/>
    <path d="M222 407 l6-7.500" stroke="#d0d0d0" stroke-width="1.100"/>
    <path d="M339.500 401.500 l2.500 2.500 2.500-2.500" fill="none" stroke="#b0b0b0" stroke-width="1.100"/>
    <path d="M489.500 401.500 l2.500 2.500 2.500-2.500" fill="none" stroke="#b0b0b0" stroke-width="1.100"/>
    <path d="M423.500 403.500 a1.500 1.500 0 1 1 1.500 1.500 a3 3 0 1 1 3-3 a4.500 4.500 0 0 1 -4.500 5 q-2 0 -3-1" fill="none" stroke="#8a8a8a" stroke-width="1"/>
    <!-- transform row -->
    <path d="M70.300 415 l5.700 2.900 -5.700 2.900z" fill="#c8c8c8"/>
  </svg>
  <div style="left:3px;top:410px;width:511px;height:1px;background:#181818"></div>
  <div style="left:3px;top:424px;width:511px;height:1px;background:#1a1a1a"></div>
  <div class="t" style="left:85px;top:411.800px;font-size:8.600px;color:#9c9c9c">变换</div>
  <div class="t" style="left:198.500px;top:411.800px;font-size:8.400px;color:#2d8ceb;font-weight:bold;text-decoration:underline">重置</div>
  <!-- right area -->
  <div style="left:513px;top:357px;width:2px;height:163px;background:#0c0c0c"></div>
  <div style="left:515px;top:357px;width:250px;height:24px;background:#1e1e1e"></div>
  <div style="left:519px;top:396px;width:246px;height:124px;background:#2d2d2d"></div>
  <div style="left:517px;top:359px;width:248px;height:8px;background:#6c6c6c;border-top:1px solid #141414;border-bottom:1px solid #141414"></div>
  <div style="left:515px;top:380px;width:250px;height:1px;background:#111"></div>
  <div style="left:515px;top:381px;width:250px;height:11px;background:#5c5c5c"></div>
  <div style="left:515px;top:392px;width:250px;height:4px;background:#1c1c1c"></div>
  <div style="left:520px;top:392px;width:245px;height:4px;background:linear-gradient(#14761a 0,#1fc21f 1px,#1fc21f 3px,#17501a 4px)"></div>
  <div style="left:515px;top:396px;width:250px;height:14px;background:#454545;border-top:1px solid #1c1c1c;border-bottom:1px solid #1c1c1c"></div>
  <div style="left:520px;top:397px;width:245px;height:12px;background:linear-gradient(#a6a4cc,#9d9bc6 50%,#9290ba)"></div>
  <div style="left:519px;top:424px;width:246px;height:1px;background:#252525"></div>
  <div class="t" style="left:519px;top:366.5px;font-size:7.500px;color:#b0b0b0;letter-spacing:-0.2px">0s</div>
  <div class="t" style="left:590.500px;top:366.500px;font-size:7.500px;color:#b0b0b0;letter-spacing:-0.2px">05s</div>
  <div class="t" style="left:668px;top:366.500px;font-size:7.500px;color:#b0b0b0;letter-spacing:-0.2px">10s</div>
  <div class="t" style="left:745.300px;top:366.500px;font-size:7.500px;color:#b0b0b0;letter-spacing:-0.2px">15s</div>
  <div style="left:596px;top:377px;width:1px;height:3px;background:#8a8a8a"></div>
  <div style="left:673px;top:377px;width:1px;height:3px;background:#8a8a8a"></div>
  <div style="left:751px;top:377px;width:1px;height:3px;background:#8a8a8a"></div>
  <svg style="left:0;top:0" width="765" height="530">
    <path d="M514.7 362.500 a3 3 0 0 1 3-2.700 h2.300 v6.400 h-2.300 a3 3 0 0 1 -3-2.500z" fill="#2d8ceb"/>
    <path d="M514.700 384 a3 3 0 0 1 3-2.700 h2.300 v11 h-2.300 a3 3 0 0 1 -3-2.500z" fill="#2d8ceb"/>
    <path d="M515.200 371 a1.500 1.500 0 0 1 1.500-1.500 h5.600 a1.500 1.500 0 0 1 1.500 1.500 v3.300 l-4.300 5.500 -4.300-5.500z" fill="#2d8ceb"/>
    <path d="M519.550 380 v140" stroke="#2b73c2" stroke-width="1.500"/>
    <path d="M517.500 412 h4 M517.500 420.500 h4 M519.500 412 v8.500" stroke="#c8c8c8" stroke-width="1.200"/>
    <!-- bottom -->
    <path d="M519.500 528 l2.500-3 2.500 3z" fill="#b0b0b0"/>
    <circle cx="536.500" cy="527.500" r="2.800" fill="#1f1f1f" stroke="#b0b0b0" stroke-width="1.200"/>
    <path d="M540 527.500 h28" stroke="#3c3c3c" stroke-width="1.500"/>
    <path d="M577 528.500 l3.500-4 2.500 2.500 2-2.500 4 4z" fill="#b0b0b0"/>
    <g fill="none" stroke="#2d8ceb" stroke-width="1.200">
      <rect x="7" y="523" width="5" height="5"/><rect x="10" y="526" width="5" height="5"/>
      <circle cx="23" cy="526" r="3.500"/><rect x="23" y="526" width="5" height="5"/>
    </g>
    <path d="M36.500 523.500 q-1.500 0 -1.500 1.500 v1.200 q0 1 -1.500 1.200 q1.500 .200 1.500 1.200 v1.500 M38 523.500 q1.500 0 1.500 1.500 v1.200 q0 1 1.500 1.200 q-1.500 .200 -1.500 1.200 v1.500" fill="none" stroke="#9a9a9a" stroke-width="1.600"/>
  </svg>
  <div style="left:3px;top:520px;width:590px;height:1px;background:#0a0a0a"></div>
  <svg style="left:0;top:0" width="765" height="530"><path d="M73.7 422.1 L83.200 431.200 L81.500 432.900 L85.800 453 L75.500 434.900 L72.500 435.600 Z" fill="#f5282d"/></svg>
  <div style="left:593px;top:520px;width:172px;height:10px;background:#1f1f1f"></div>
</div>
<div class="a" style="left:0;top:0;width:1px;height:32px;background:#2a2a2a;opacity:.85"></div>
</body>
</html>
